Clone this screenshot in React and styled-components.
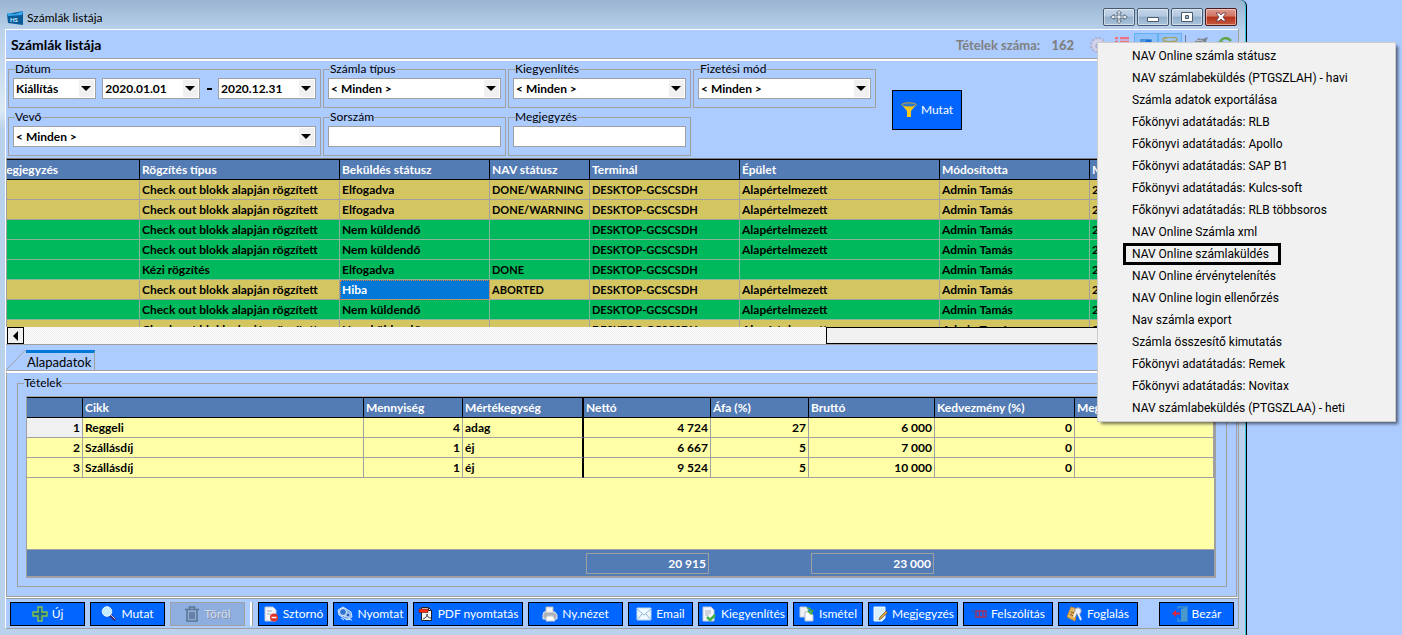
import styled, { createGlobalStyle, css } from "styled-components";

const GlobalStyle = createGlobalStyle`
  * {
    box-sizing: border-box;
  }

  body {
    margin: 0;
    background: #accbff;
    color: #000;
    font-family: Lato, "Open Sans", sans-serif;
    font-size: 12px;
    line-height: 16px;
  }

  button,
  input,
  select {
    font: inherit;
    color: inherit;
    border-radius: 0;
  }
`;

const Window = styled.div`
  width: calc(100% - 155px);
  min-height: 100vh;
  display: flex;
  flex-direction: column;
  padding: 0 7px 6px 5px;
  background: linear-gradient(#99b4d1 0, #b9d1ea 30px, #dce9f5 110px, #b9d1ea 130px);
  border-right: 1px solid #000;
  border-top-right-radius: 6px;
  box-shadow: inset -1px 0 #35c5dc;
`;

const TitleBar = styled.header`
  display: flex;
  align-items: center;
  justify-content: space-between;
  height: 29px;
  padding: 5px 2px 0;
`;

const TitleText = styled.div`
  display: flex;
  align-items: center;
  gap: 4px;
  padding-top: 2px;
`;

const TitleButtons = styled.div`
  display: flex;
  gap: 2px;
`;

const TitleButton = styled.button`
  display: flex;
  align-items: center;
  justify-content: center;
  width: 32px;
  height: 18px;
  padding: 0;
  border: 1px solid ${(p) => (p.$close ? "#4a1a20" : "#47586d")};
  border-radius: 2px;
  background: ${(p) =>
    p.$close
      ? "linear-gradient(#dd9a8c 0, #cf7563 45%, #b53018 50%, #c65a42 100%)"
      : "linear-gradient(#c3d5e8 0, #b3c8e0 45%, #92aecb 50%, #abc3dc 100%)"};
  box-shadow: inset 0 0 0 1px rgba(255, 255, 255, 0.45);
`;

const Client = styled.main`
  flex: 1;
  display: flex;
  flex-direction: column;
  background: #accbff;
  border-left: 1px solid #fff;
  border-right: 1px solid #a0a0a0;
  border-bottom: 1px solid #a0a0a0;
`;

const Heading = styled.div`
  display: flex;
  align-items: center;
  justify-content: space-between;
  height: 32px;
  padding: 0 1px 0 5px;
  border-top: 1px solid #fff;
  border-bottom: 2px solid #fff;
  box-shadow: inset 0 -1px #a0a0a0;

  h1 {
    margin: 0;
    font-size: 14px;
  }
`;

const HeadingTools = styled.div`
  display: flex;
  align-items: center;
  gap: 12px;
`;

const Count = styled.span`
  color: #808080;
  font-size: 13px;
  font-weight: 700;

  b {
    margin-left: 8px;
  }
`;

const ToolStrip = styled.div`
  display: flex;
  align-items: center;
`;

const ToolButton = styled.button`
  display: flex;
  align-items: center;
  justify-content: center;
  width: 24px;
  height: 24px;
  padding: 0;
  border: 1px solid ${(p) => (p.$active ? "#66b1f5" : "transparent")};
  background: ${(p) => (p.$active ? "#8fc1fb" : "transparent")};
`;

const ToolSeparator = styled.span`
  width: 1px;
  height: 20px;
  margin: 0 3px;
  background: #707a8c;
`;

const Filters = styled.form`
  display: flex;
  align-items: center;
  gap: 16px;
  padding: 0 2px;
`;

const FilterGrid = styled.div`
  display: grid;
  grid-template-columns: 313px repeat(3, 183px);
  gap: 1px 2px;
  padding-bottom: 2px;
`;

const Group = styled.fieldset`
  min-width: 0;
  height: 47px;
  margin: 0;
  padding: 1px 4px 8px;
  border: 1px solid #a0a0a0;

  legend {
    height: 16px;
    margin-left: 2px;
    padding: 0;
  }
`;

const GroupRow = styled.div`
  display: flex;
  align-items: center;
  justify-content: space-between;
  font-weight: 700;
`;

const Dash = styled.span`
  width: 5px;
  height: 2px;
  background: #000;
`;

const SelectWrapper = styled.div`
  position: relative;
  width: ${(p) => p.$width || "100%"};

  &::before {
    content: "";
    position: absolute;
    top: 2px;
    right: 2px;
    width: 15px;
    height: 17px;
    background: #f0f0f0;
    pointer-events: none;
  }

  &::after {
    content: "";
    position: absolute;
    top: 8px;
    right: 5px;
    border: 5px solid transparent;
    border-top-color: #000;
    border-bottom: 0;
    pointer-events: none;
  }
`;

const field = css`
  display: block;
  width: 100%;
  height: 21px;
  padding: 0 2px;
  border: 1px solid #a0a0a0;
  background: #fff;
  font-weight: 700;
`;

const StyledSelect = styled.select`
  ${field}
  appearance: none;
`;

const TextInput = styled.input`
  ${field}
`;

const ActionButton = styled.button`
  display: flex;
  align-items: center;
  justify-content: center;
  gap: 4px;
  flex: 0 0 auto;
  width: ${(p) => p.$width}px;
  height: ${(p) => p.$height || 24}px;
  padding: 0;
  border: 1px solid #000;
  background: #0066ff;
  color: #fff;
  font-size: 12px;
  white-space: nowrap;

  &:disabled {
    border-color: #a0a0a0;
    background: #8eaee0;
    color: #d2dcee;
    text-shadow: 1px 1px #8c96aa;
  }
`;

const InvoiceGrid = styled.div`
  height: 169px;
  overflow: hidden;
  border-top: 1px solid #808080;
  border-left: 1px solid #a0a0a0;
`;

const Table = styled.table`
  width: 100%;
  border-spacing: 0;
  table-layout: fixed;
  font-weight: 700;

  th,
  td {
    height: 20px;
    padding: 0 2px;
    border-right: 1px solid #a0a0a0;
    border-bottom: 1px solid #a0a0a0;
    overflow: hidden;
    text-align: left;
    white-space: nowrap;
  }

  th {
    height: 21px;
    border-color: #000;
    border-top: 1px solid #000;
    background: #537bb4;
    color: #fff;
  }
`;

const InvoiceTable = styled(Table)`
  width: calc(100% + 15px);
  margin-left: -14px;
`;

const InvoiceRow = styled.tr`
  background: ${(p) => (p.$sent ? "#00b95c" : "#d3c661")};

  td {
    border-color: ${(p) => (p.$sent ? "#8cb29c" : "#a0a0a0")};
  }
`;

const InvoiceCell = styled.td`
  ${(p) =>
    p.$selected &&
    css`
      background: #0078d7;
      color: #fff;
      outline: 1px dotted #e0803a;
      outline-offset: -1px;
    `}
`;

const CodeCell = styled.td`
  font-size: 11px;
`;

const ScrollBar = styled.div`
  display: flex;
  height: 18px;
  padding-left: 1px;
  border-bottom: 1px solid #a0a0a0;
  background: repeating-conic-gradient(#ececec 0 25%, #fff 0 50%) 0 0 / 2px 2px;
`;

const ScrollButton = styled.button`
  width: 17px;
  height: 17px;
  padding: 0;
  border: 1px solid #000;
  background: #f0f0f0;

  svg {
    display: block;
    margin: auto;
  }
`;

const ScrollTrack = styled.div`
  flex: 1;
  display: flex;
  justify-content: flex-end;
`;

const ScrollThumb = styled.div`
  width: 33%;
  height: 17px;
  border: 1px solid #000;
  background: #f0f0f0;
`;

const Tabs = styled.div`
  display: flex;
  align-items: flex-end;
  height: 26px;
  border-bottom: 1px solid #a0a0a0;
`;

const Tab = styled.button`
  height: 20px;
  padding: 0 3px 0 1px;
  border: 0;
  border-top: 3px solid #0078d7;
  border-right: 1px solid #a0a0a0;
  background: transparent;
  font-size: 13px;
`;

const TabPanel = styled.section`
  flex: 1;
  margin-right: 1px;
  padding: 2px 9px 9px 10px;
  border: 1px solid #a0a0a0;
  border-top: 2px solid #fff;
`;

const Items = styled.fieldset`
  min-width: 0;
  margin: 0;
  padding: 5px 10px 8px 8px;
  border: 1px solid #a0a0a0;

  legend {
    margin-left: -2px;
    padding: 0;
  }
`;

const ItemsGrid = styled.div`
  border: 1px solid #a0a0a0;
  border-right-width: 2px;
  border-bottom-width: 2px;
  background: #ffffa8;
`;

const ItemsBody = styled.div`
  min-height: 152px;
`;

const ItemsTable = styled(Table)`
  tbody tr:first-child td:first-child {
    background: #f0f0f0;
  }

  th:nth-child(4),
  td:nth-child(4) {
    border-right: 2px solid #000;
  }
`;

const NumberCell = styled.td`
  && {
    text-align: right;
  }
`;

const Totals = styled.div`
  display: flex;
  align-items: center;
  gap: 102px;
  height: 27px;
  padding-left: 559px;
  border-top: 1px solid #a0a0a0;
  background: #537bb4;
`;

const Total = styled.output`
  width: 123px;
  height: 21px;
  padding: 2px 2px 0;
  border: 1px solid #a0a0a0;
  color: #fff;
  font-weight: 700;
  text-align: right;
`;

const BottomBar = styled.footer`
  display: flex;
  align-items: center;
  justify-content: space-between;
  height: 31px;
  padding: 1px 4px 0;
  border-top: 1px solid #fff;
  box-shadow: inset 0 1px #a0a0a0;
`;

const ButtonRow = styled.div`
  display: flex;
  gap: 5px;
`;

const BarSeparator = styled.span`
  width: 3px;
  height: 24px;
  border-left: 2px solid #fff;
  border-right: 1px solid #a0a0a0;
`;

const Menu = styled.ul`
  position: absolute;
  top: 42px;
  right: 6px;
  width: 299px;
  margin: 0;
  padding: 2px 0 2px 25px;
  list-style: none;
  border: 1px solid #ccc;
  background: #f1f1f1;
  box-shadow: 3px 3px 3px -1px rgba(0, 0, 0, 0.55);
  font-family: Roboto, "Open Sans", sans-serif;
  font-size: 12px;
`;

const MenuItem = styled.button`
  display: block;
  height: 22px;
  padding: 0 12px 0 9px;
  border: 0;
  background: transparent;
  box-shadow: ${(p) => (p.$marked ? "inset 0 0 0 3px #000" : "none")};
  white-space: nowrap;
`;

const invoiceColumns = [
  ["Megjegyzés", 147],
  ["Rögzítés típus", 200],
  ["Beküldés státusz", 150],
  ["NAV státusz", 100],
  ["Terminál", 150],
  ["Épület", 200],
  ["Módosította", 150],
  ["Módosítva"],
];

const checkout = "Check out blokk alapján rögzített";
const building = "Alapértelmezett";

const invoices = [
  { type: checkout, status: "Elfogadva", nav: "DONE/WARNING", building },
  { type: checkout, status: "Elfogadva", nav: "DONE/WARNING", building },
  { type: checkout, status: "Nem küldendő", nav: "", building, sent: true },
  { type: checkout, status: "Nem küldendő", nav: "", building, sent: true },
  { type: "Kézi rögzítés", status: "Elfogadva", nav: "DONE", building: "", sent: true },
  { type: checkout, status: "Hiba", nav: "ABORTED", building, selected: true },
  { type: checkout, status: "Nem küldendő", nav: "", building, sent: true },
  { type: checkout, status: "Nem küldendő", nav: "", building },
];

const itemColumns = [
  ["", 56],
  ["Cikk", 281],
  ["Mennyiség", 99],
  ["Mértékegység", 121],
  ["Nettó", 127],
  ["Áfa (%)", 98],
  ["Bruttó", 126],
  ["Kedvezmény (%)", 140],
  ["Megjegyzés"],
];

const items = [
  ["Reggeli", "4", "adag", "4 724", "27", "6 000", "0"],
  ["Szállásdíj", "1", "éj", "6 667", "5", "7 000", "0"],
  ["Szállásdíj", "1", "éj", "9 524", "5", "10 000", "0"],
];

const menuItems = [
  "NAV Online számla státusz",
  "NAV számlabeküldés (PTGSZLAH) - havi",
  "Számla adatok exportálása",
  "Főkönyvi adatátadás: RLB",
  "Főkönyvi adatátadás: Apollo",
  "Főkönyvi adatátadás: SAP B1",
  "Főkönyvi adatátadás: Kulcs-soft",
  "Főkönyvi adatátadás: RLB többsoros",
  "NAV Online Számla xml",
  "NAV Online számlaküldés",
  "NAV Online érvénytelenítés",
  "NAV Online login ellenőrzés",
  "Nav számla export",
  "Számla összesítő kimutatás",
  "Főkönyvi adatátadás: Remek",
  "Főkönyvi adatátadás: Novitax",
  "NAV számlabeküldés (PTGSZLAA) - heti",
];

const page = <path d="M2 1h8l3 3v11H2z" fill="#f4f6fa" stroke="#c2cad6" />;

const icons = {
  plus: (
    <path d="M6 1h4v5h5v4h-5v5H6v-5H1V6h5z" fill="#14669c" stroke="#86c54a" strokeWidth="1.4" />
  ),
  search: (
    <>
      <path d="M9 9l5 5" stroke="#3a2d78" strokeWidth="3" />
      <path d="M9 8l5 5" stroke="#c9c4dd" />
      <circle cx="6" cy="5.5" r="4.8" fill="#c4eeff" stroke="#e9f6ff" />
    </>
  ),
  trash: (
    <g fill="none" stroke="#5d7593" strokeWidth="1.6">
      <path d="M1 3.500h14M5.500 3V1h5v2M3 4v11h10V4M6 6v7M8 6v7M10 6v7" />
    </g>
  ),
  storno: (
    <>
      {page}
      <path d="M4 5h5M4 8h4" stroke="#a3adba" />
      <circle cx="11" cy="11.500" r="4" fill="#e23128" />
      <path d="M8.500 11.500h5" stroke="#fff" strokeWidth="1.500" />
    </>
  ),
  print: (
    <>
      <path d="M1 4l5-3 8 5 1 5-5 3-8-5z" fill="#74a8ea" stroke="#d5e6ff" />
      <circle cx="6" cy="6" r="3.500" fill="#2f73cd" stroke="#e5efff" />
      <path d="M7 10l6 1M9 13l6 1M4 12l3 2" stroke="#dceaff" />
      <circle cx="11" cy="9" r="2" fill="#2258ad" stroke="#c1d9ff" />
    </>
  ),
  pdf: (
    <>
      <path d="M3.500 1.500h7l3 3v10h-10z" fill="#f4f4f4" stroke="#222" />
      <path d="M10.500 1.500v3h3" fill="none" stroke="#222" />
      <path d="M1 3h9v3.500H1z" fill="#ff2b10" stroke="#5e1a10" strokeWidth=".6" />
      <path d="M5 13c3-1 4-3 4-5 0 3 2 4 4 4" fill="none" stroke="#444" />
    </>
  ),
  printer: (
    <>
      <path d="M4 1h7v6H4z" fill="#f7f7f7" stroke="#bbb" />
      <path d="M2 6h11l2 3v4h-3l-1-2H5l-1 2H1V9z" fill="#aeb3ba" stroke="#e5e5e5" />
      <path d="M5 10h6l2 5H4z" fill="#fff" stroke="#ccc" />
    </>
  ),
  mail: (
    <>
      <path d="M1 2h14v12H1z" fill="#f0f8ff" stroke="#b9d5ed" />
      <path d="M1 3l7 6 7-6M1 14l5-6M15 14l-5-6" fill="none" stroke="#8fb4d6" />
    </>
  ),
  paid: (
    <>
      {page}
      <path d="M4 5h6M4 7h6M4 9h4" stroke="#aab2bd" />
      <path d="M6 11l3 3 5-5" fill="none" stroke="#41b444" strokeWidth="2.500" />
    </>
  ),
  repeat: (
    <>
      <path d="M1 1h6l2 2v8H1z" fill="#eef0f2" stroke="#c9cdd2" />
      <path d="M6 6h5l3 3v6H6z" fill="#fff" stroke="#b9bec7" />
      <path d="M8 2c3 0 4 2 4 4M9 5l3 3 2-4" fill="none" stroke="#4caf3c" strokeWidth="1.600" />
    </>
  ),
  note: (
    <>
      <path d="M2 1h11v11l-3 3H2z" fill="#d8f0fb" stroke="#f4fcff" />
      <path d="M7 14l1-3 6-6 1.500 1.500-6 6z" fill="#d9a442" stroke="#6e5a35" strokeWidth=".7" />
    </>
  ),
  demand: (
    <>
      <path d="M0 5h5M2 8h3M3 11h2" stroke="#33518f" />
      <path d="M5 5h10v6H5zM8.500 5v6M12 5v6" fill="none" stroke="#a8325c" strokeWidth="1.300" />
    </>
  ),
  booking: (
    <>
      <path d="M4 1l6 2-2 12-8-4z" fill="#e5b45e" stroke="#c58a32" />
      <path d="M3 8l3 2M4 6l3 1" stroke="#7b5520" />
      <circle cx="11" cy="5" r="3.200" fill="#edf1f7" stroke="#9aa5b7" />
      <path d="M11 7l3 7M9 6l-2 5" stroke="#edf1f7" strokeWidth="2" />
    </>
  ),
  exit: (
    <>
      <path d="M6 3V1h9v14H6v-3" fill="none" stroke="#4190c8" strokeWidth="1.300" />
      <path d="M9 3l6-2v14H9z" fill="#4a9bcc" />
      <path d="M8 7.500H3" stroke="#e0263d" strokeWidth="2" />
      <path d="M4 4v7L0 7.500z" fill="#e0263d" />
    </>
  ),
  funnel: (
    <>
      <path d="M1 3l5 6v6h4V9l5-6z" fill="#f7c81e" />
      <ellipse cx="8" cy="2.800" rx="7.300" ry="2" fill="#2877da" stroke="#cfa929" />
    </>
  ),
  gear: (
    <>
      <circle cx="8" cy="8" r="6.500" fill="#d5d8ed" stroke="#b1aecb" strokeWidth="3" strokeDasharray="2 1.400" />
      <circle cx="8" cy="8" r="6" fill="#cfd2ea" />
      <circle cx="8" cy="9" r="2.200" fill="#accbff" stroke="#9999b8" />
    </>
  ),
  list: (
    <path d="M1 1h3M6 1h9M1 5h3M6 5h9M1 9h3M6 9h9" stroke="#f4707c" strokeWidth="2.500" />
  ),
  screen: (
    <>
      <path d="M1 1h14v12H1z" fill="#1972d3" stroke="#a8ccf5" />
      <path d="M2 2h6v5H2z" fill="#4895e6" />
    </>
  ),
  ring: (
    <>
      <path d="M1 2l5 7v6h4V9l5-7" fill="#d8be52" />
      <ellipse cx="8" cy="2.500" rx="7" ry="2.200" fill="#9ec7f3" stroke="#a8a05e" strokeWidth="1.500" />
    </>
  ),
  tools: (
    <>
      <path d="M1 5l5-4 3 1 6-2-2 5 2 5-9 2z" fill="#7f8794" />
      <path d="M3 4l5-1 2 2" fill="none" stroke="#c4cbd5" />
    </>
  ),
  refresh: (
    <path d="M14 4C10-1 3 1 3 7M0 5l3 4 4-4" fill="none" stroke="#62a64c" strokeWidth="2.500" />
  ),
};

function Icon({ name, size = 16 }) {
  return (
    <svg width={size} height={size} viewBox="0 0 16 16" aria-hidden="true">
      {icons[name]}
    </svg>
  );
}

function Logo() {
  return (
    <svg width="16" height="15" viewBox="0 0 16 15" aria-hidden="true">
      <path d="M0 3l16-3v14L1 12z" fill="#085b99" />
      <path d="M0 2l8 1 8-3-1 4-14 1z" fill="#39a8ec" />
      <text x="3" y="11" fill="#c9ecff" fontSize="6" fontWeight="700">
        HS
      </text>
    </svg>
  );
}

function Select({ id, label, value, width }) {
  return (
    <SelectWrapper $width={width}>
      <StyledSelect id={id} aria-label={label} defaultValue={value}>
        <option>{value}</option>
      </StyledSelect>
    </SelectWrapper>
  );
}

function FilterGroup({ id, label, text }) {
  return (
    <Group>
      <legend>
        <label htmlFor={id}>{label}</label>
      </legend>
      {text ? <TextInput id={id} type="text" /> : <Select id={id} value="< Minden >" />}
    </Group>
  );
}

function FilterBar() {
  return (
    <Filters onSubmit={(event) => event.preventDefault()}>
      <FilterGrid>
        <Group>
          <legend>
            <label htmlFor="date-kind">Dátum</label>
          </legend>
          <GroupRow>
            <Select id="date-kind" value="Kiállítás" width="83px" />
            <Select label="Dátum kezdete" value="2020.01.01" width="98px" />
            <Dash />
            <Select label="Dátum vége" value="2020.12.31" width="98px" />
          </GroupRow>
        </Group>
        <FilterGroup id="invoice-type" label="Számla típus" />
        <FilterGroup id="settlement" label="Kiegyenlítés" />
        <FilterGroup id="payment" label="Fizetési mód" />
        <FilterGroup id="customer" label="Vevő" />
        <FilterGroup id="serial" label="Sorszám" text />
        <FilterGroup id="comment" label="Megjegyzés" text />
      </FilterGrid>
      <ActionButton $width={70} $height={40}>
        <Icon name="funnel" />
        Mutat
      </ActionButton>
    </Filters>
  );
}

function Columns({ columns }) {
  return (
    <>
      <colgroup>
        {columns.map(([name, width]) => (
          <col key={name} width={width} />
        ))}
      </colgroup>
      <thead>
        <tr>
          {columns.map(([name]) => (
            <th key={name}>{name}</th>
          ))}
        </tr>
      </thead>
    </>
  );
}

function Invoices() {
  return (
    <>
      <InvoiceGrid>
        <InvoiceTable>
          <Columns columns={invoiceColumns} />
          <tbody>
            {invoices.map((invoice, index) => (
              <InvoiceRow key={index} $sent={invoice.sent}>
                <td />
                <td>{invoice.type}</td>
                <InvoiceCell $selected={invoice.selected}>{invoice.status}</InvoiceCell>
                <CodeCell>{invoice.nav}</CodeCell>
                <CodeCell>DESKTOP-GCSCSDH</CodeCell>
                <td>{invoice.building}</td>
                <td>Admin Tamás</td>
                <td>2020</td>
              </InvoiceRow>
            ))}
          </tbody>
        </InvoiceTable>
      </InvoiceGrid>
      <ScrollBar>
        <ScrollButton aria-label="Balra">
          <svg width="5" height="10" viewBox="0 0 5 10">
            <path d="M5 0v10L0 5z" />
          </svg>
        </ScrollButton>
        <ScrollTrack>
          <ScrollThumb />
        </ScrollTrack>
        <ScrollButton aria-label="Jobbra">
          <svg width="5" height="10" viewBox="0 0 5 10">
            <path d="M0 0v10l5-5z" />
          </svg>
        </ScrollButton>
      </ScrollBar>
    </>
  );
}

function InvoiceItems() {
  return (
    <Items>
      <legend>Tételek</legend>
      <ItemsGrid>
        <ItemsBody>
          <ItemsTable>
            <Columns columns={itemColumns} />
            <tbody>
              {items.map(([name, amount, unit, net, vat, gross, discount], index) => (
                <tr key={index}>
                  <NumberCell>{index + 1}</NumberCell>
                  <td>{name}</td>
                  <NumberCell>{amount}</NumberCell>
                  <td>{unit}</td>
                  <NumberCell>{net}</NumberCell>
                  <NumberCell>{vat}</NumberCell>
                  <NumberCell>{gross}</NumberCell>
                  <NumberCell>{discount}</NumberCell>
                  <td />
                </tr>
              ))}
            </tbody>
          </ItemsTable>
        </ItemsBody>
        <Totals>
          <Total>20 915</Total>
          <Total>23 000</Total>
        </Totals>
      </ItemsGrid>
    </Items>
  );
}

const invoiceActions = [
  ["Sztornó", "storno", 70],
  ["Nyomtat", "print", 75],
  ["PDF nyomtatás", "pdf", 110],
  ["Ny.nézet", "printer", 95],
  ["Email", "mail", 65],
  ["Kiegyenlítés", "paid", 90],
  ["Ismétel", "repeat", 70],
  ["Megjegyzés", "note", 90],
  ["Felszólítás", "demand", 90],
  ["Foglalás", "booking", 80],
];

function Actions() {
  return (
    <BottomBar>
      <ButtonRow>
        <ActionButton $width={75}>
          <Icon name="plus" />
          Új
        </ActionButton>
        <ActionButton $width={75}>
          <Icon name="search" />
          Mutat
        </ActionButton>
        <ActionButton $width={75} disabled>
          <Icon name="trash" />
          Töröl
        </ActionButton>
        <BarSeparator />
        {invoiceActions.map(([label, icon, width]) => (
          <ActionButton key={label} $width={width}>
            <Icon name={icon} />
            {label}
          </ActionButton>
        ))}
      </ButtonRow>
      <ActionButton $width={75}>
        <Icon name="exit" />
        Bezár
      </ActionButton>
    </BottomBar>
  );
}

function Title() {
  return (
    <TitleBar>
      <TitleText>
        <Logo />
        Számlák listája
      </TitleText>
      <TitleButtons>
        <TitleButton aria-label="Mozgatás">
          <svg width="18" height="14" viewBox="0 0 18 14">
            <path
              d="M9 .5l2.500 2.500H10v3h4V4.500L17.500 7 14 9.500V8h-4v3h1.500L9 13.500 6.500 11H8V8H4v1.500L.5 7 4 4.500V6h4V3H6.500z"
              fill="#e9eef4"
              stroke="#4d5a6b"
              strokeWidth=".8"
            />
          </svg>
        </TitleButton>
        <TitleButton aria-label="Kis méret">
          <svg width="12" height="12" viewBox="0 0 12 12">
            <path d="M.5 6.500h11v4H.5z" fill="#fff" stroke="#4d5a6b" />
          </svg>
        </TitleButton>
        <TitleButton aria-label="Teljes méret">
          <svg width="12" height="10" viewBox="0 0 12 10">
            <path d="M.5.5h11v9H.5zM4.500 3.500h3v3h-3z" fill="#fff" stroke="#4d5a6b" fillRule="evenodd" />
          </svg>
        </TitleButton>
        <TitleButton aria-label="Bezárás" $close>
          <svg width="12" height="10" viewBox="0 0 12 10">
            <path
              d="M1 1h3l2 2 2-2h3L8 5l3 4H8L6 7 4 9H1l3-4z"
              fill="#fff"
              stroke="#60333a"
              strokeWidth=".8"
            />
          </svg>
        </TitleButton>
      </TitleButtons>
    </TitleBar>
  );
}

function PageHeading() {
  return (
    <Heading>
      <h1>Számlák listája</h1>
      <HeadingTools>
        <Count>
          Tételek száma: <b>162</b>
        </Count>
        <ToolStrip>
          <ToolButton aria-label="Beállítások">
            <Icon name="gear" />
          </ToolButton>
          <ToolButton aria-label="Lista">
            <Icon name="list" />
          </ToolButton>
          <ToolButton aria-label="Részletek" $active>
            <Icon name="screen" size={14} />
          </ToolButton>
          <ToolButton aria-label="Szűrő" $active>
            <Icon name="ring" />
          </ToolButton>
          <ToolSeparator />
          <ToolButton aria-label="Eszközök">
            <Icon name="tools" />
          </ToolButton>
          <ToolButton aria-label="Frissítés">
            <Icon name="refresh" />
          </ToolButton>
        </ToolStrip>
      </HeadingTools>
    </Heading>
  );
}

export default function App() {
  return (
    <>
      <GlobalStyle />
      <Window>
        <Title />
        <Client>
          <PageHeading />
          <FilterBar />
          <Invoices />
          <Tabs>
            <svg width="20" height="20" viewBox="0 0 20 20" aria-hidden="true">
              <path d="M0 20L19 .5h1" fill="none" stroke="#a0a0a0" />
            </svg>
            <Tab>Alapadatok</Tab>
          </Tabs>
          <TabPanel>
            <InvoiceItems />
          </TabPanel>
          <Actions />
        </Client>
      </Window>
      <Menu>
        {menuItems.map((item) => (
          <li key={item}>
            <MenuItem $marked={item === "NAV Online számlaküldés"}>{item}</MenuItem>
          </li>
        ))}
      </Menu>
    </>
  );
}
